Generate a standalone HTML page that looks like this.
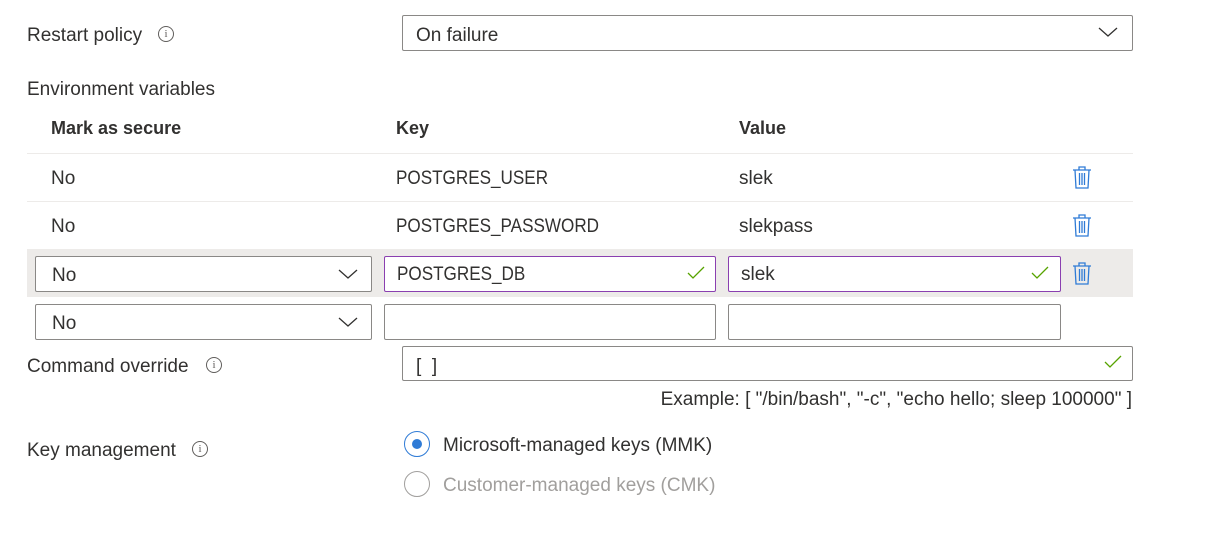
<!DOCTYPE html>
<html><head><style>
body{margin:0;width:1230px;height:543px;background:#fff;font-family:"Liberation Sans",sans-serif;font-size:19px;color:#323130;position:relative;overflow:hidden}
.a{position:absolute;white-space:nowrap;line-height:22px;margin-top:2px}
.u{transform:scaleX(0.9);transform-origin:left center}
.box{position:absolute;border:1px solid #8a8886;border-radius:2px;box-sizing:border-box;background:#fff}
.pur{border-color:#8a3fb0}
.info{position:absolute;width:16px;height:16px;border:1px solid #605e5c;border-radius:50%;box-sizing:border-box;font-size:11px;line-height:14px;text-align:center;color:#605e5c;font-family:"Liberation Serif",serif}
.line{position:absolute;left:27px;width:1106px;height:1px;background:#edebe9}
svg{position:absolute}
</style></head><body>
<div class="a" style="left:27px;top:23px">Restart policy</div>
<div class="info" style="left:158px;top:26px">i</div>
<div class="box" style="left:402px;top:15px;width:731px;height:36px"></div>
<div class="a" style="left:416px;top:23px">On failure</div>
<svg style="left:1098px;top:25px" width="20" height="14"><path d="M1 3l9 8 9-8" fill="none" stroke="#323130" stroke-width="1.3"/></svg>

<div class="a" style="left:27px;top:77px">Environment variables</div>
<div class="a" style="left:51px;top:115px;font-weight:bold;font-size:18px">Mark as secure</div>
<div class="a" style="left:396px;top:115px;font-weight:bold;font-size:18px">Key</div>
<div class="a" style="left:739px;top:115px;font-weight:bold;font-size:18px">Value</div>
<div class="line" style="top:153px"></div>
<div class="a" style="left:51px;top:166px">No</div>
<div class="a u" style="left:396px;top:166px">POSTGRES_USER</div>
<div class="a" style="left:739px;top:166px">slek</div>
<div class="line" style="top:201px"></div>
<div class="a" style="left:51px;top:214px">No</div>
<div class="a u" style="left:396px;top:214px">POSTGRES_PASSWORD</div>
<div class="a" style="left:739px;top:214px">slekpass</div>

<div style="position:absolute;left:27px;top:249px;width:1106px;height:48px;background:#edebe9"></div>
<div class="box" style="left:35px;top:256px;width:337px;height:36px"></div>
<div class="a" style="left:52px;top:263px">No</div>
<svg style="left:338px;top:267px" width="20" height="14"><path d="M1 3l9 8 9-8" fill="none" stroke="#323130" stroke-width="1.3"/></svg>
<div class="box pur" style="left:384px;top:256px;width:332px;height:36px"></div>
<div class="a u" style="left:397px;top:262px">POSTGRES_DB</div>
<svg style="left:687px;top:266px" width="18" height="14"><path d="M1 7l5 5 11-11" fill="none" stroke="#57a300" stroke-width="1.3"/></svg>
<div class="box pur" style="left:728px;top:256px;width:333px;height:36px"></div>
<div class="a" style="left:741px;top:262px">slek</div>
<svg style="left:1031px;top:266px" width="18" height="14"><path d="M1 7l5 5 11-11" fill="none" stroke="#57a300" stroke-width="1.3"/></svg>

<div class="box" style="left:35px;top:304px;width:337px;height:36px"></div>
<div class="a" style="left:52px;top:311px">No</div>
<svg style="left:338px;top:315px" width="20" height="14"><path d="M1 3l9 8 9-8" fill="none" stroke="#323130" stroke-width="1.3"/></svg>
<div class="box" style="left:384px;top:304px;width:332px;height:36px"></div>
<div class="box" style="left:728px;top:304px;width:333px;height:36px"></div>

<svg style="left:1071px;top:165px" width="22" height="25" viewBox="0 0 22 25"><g fill="none" stroke="#2f7bd6" stroke-width="1.3"><path d="M2 5h18M8 5V2h6v3M4 5l1 18h12l1-18M8.5 8v12M11 8v12M13.5 8v12"/></g></svg>
<svg style="left:1071px;top:213px" width="22" height="25" viewBox="0 0 22 25"><g fill="none" stroke="#2f7bd6" stroke-width="1.3"><path d="M2 5h18M8 5V2h6v3M4 5l1 18h12l1-18M8.5 8v12M11 8v12M13.5 8v12"/></g></svg>
<svg style="left:1071px;top:261px" width="22" height="25" viewBox="0 0 22 25"><g fill="none" stroke="#2f7bd6" stroke-width="1.3"><path d="M2 5h18M8 5V2h6v3M4 5l1 18h12l1-18M8.5 8v12M11 8v12M13.5 8v12"/></g></svg>

<div class="a" style="left:27px;top:354px">Command override</div>
<div class="info" style="left:206px;top:357px">i</div>
<div class="box" style="left:402px;top:346px;width:731px;height:35px"></div>
<div class="a" style="left:416px;top:354px">[ &nbsp;]</div>
<svg style="left:1104px;top:355px" width="18" height="14"><path d="M1 7l5 5 11-11" fill="none" stroke="#57a300" stroke-width="1.3"/></svg>
<div class="a" style="right:98px;top:387px;font-size:19px">Example: [ "/bin/bash", "-c", "echo hello; sleep 100000" ]</div>

<div class="a" style="left:27px;top:438px">Key management</div>
<div class="info" style="left:192px;top:441px">i</div>
<div style="position:absolute;left:404px;top:431px;width:26px;height:26px;border:1px solid #2f7bd6;border-radius:50%;box-sizing:border-box"></div>
<div style="position:absolute;left:412px;top:439px;width:10px;height:10px;background:#2f7bd6;border-radius:50%"></div>
<div class="a" style="left:443px;top:433px">Microsoft-managed keys (MMK)</div>
<div style="position:absolute;left:404px;top:471px;width:26px;height:26px;border:1px solid #a19f9d;border-radius:50%;box-sizing:border-box"></div>
<div class="a" style="left:443px;top:473px;color:#a19f9d">Customer-managed keys (CMK)</div>
</body></html>
